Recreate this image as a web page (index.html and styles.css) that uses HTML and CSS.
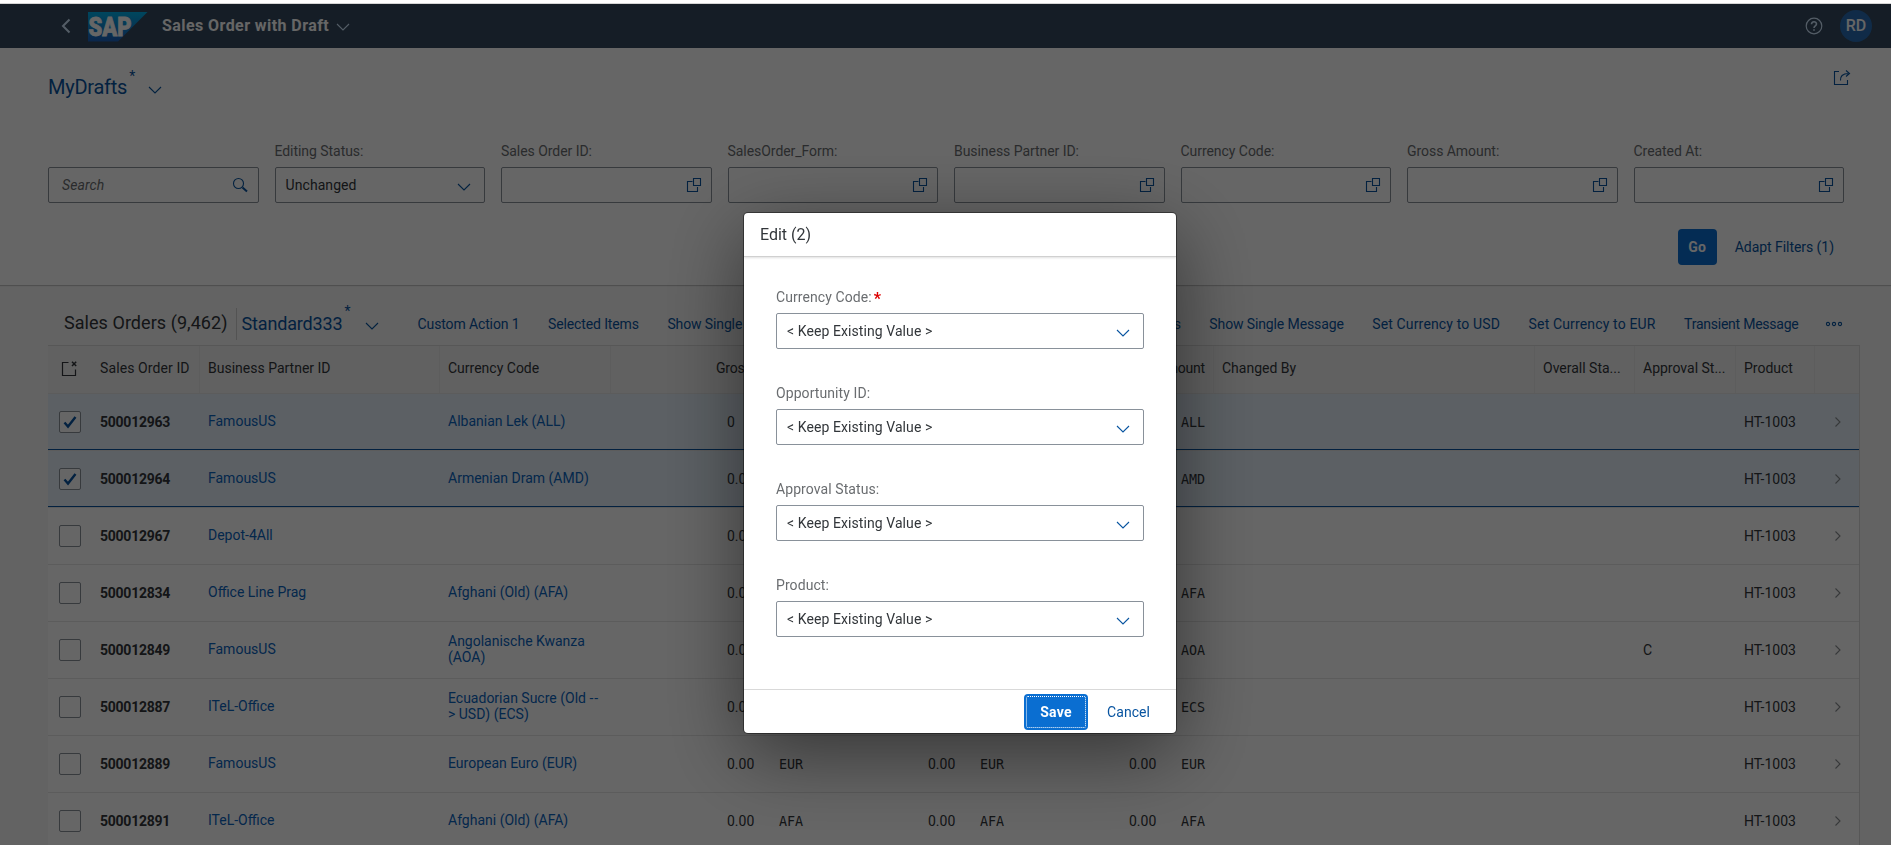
FILE: index.html
```html
<!DOCTYPE html>
<html lang="en">
<head>
    <meta charset="UTF-8">
    <meta name="viewport" content="width=device-width, initial-scale=1.0">
    <title>Sales Order with Draft</title>
    <link rel="stylesheet" href="styles.css">
</head>
<body>
    <!-- Shared icons -->
    <svg class="sprite" aria-hidden="true">
        <symbol id="chevron" viewBox="0 0 14 8"><path d="M1 1l6 6 6-6"/></symbol>
        <symbol id="valuehelp" viewBox="0 0 16 16"><path d="M6.5 4.5h-5v10h10v-4.500M7.500 1.500h7v7h-7z"/></symbol>
    </svg>

    <header class="shell">
        <svg class="back" width="10" height="16" viewBox="0 0 10 16"><path d="M8.500 1.500L2 8l6.500 6.500"/></svg>
        <svg class="logo" width="60" height="30" viewBox="0 0 60 30">
            <defs>
                <linearGradient id="sap" x1="0" y1="0" x2="0" y2="1">
                    <stop offset="0" stop-color="#00b1eb"/>
                    <stop offset="1" stop-color="#1e5fbb"/>
                </linearGradient>
            </defs>
            <path d="M0 0h59.500L30 29.500H0z" fill="url(#sap)"/>
            <text x="0.500" y="23.500" textLength="43" lengthAdjust="spacingAndGlyphs">SAP</text>
        </svg>
        <h1 class="shell-title">Sales Order with Draft</h1>
        <svg class="icon shell-chevron" width="14" height="8"><use href="#chevron"/></svg>
        <svg class="help" width="18" height="18" viewBox="0 0 18 18">
            <circle cx="9" cy="9" r="7.800"/>
            <path class="mark" d="M6.500 7.300c0-3.300 5-3.300 5-.3 0 1.800-2.500 1.900-2.500 3.900M9 12.300v1.500"/>
        </svg>
        <div class="avatar">RD</div>
    </header>

    <section class="page-header">
        <div class="variant-row">
            <span class="variant">MyDrafts</span><span class="dirty">*</span>
            <svg class="icon" width="14" height="8"><use href="#chevron"/></svg>
            <svg class="icon share" width="18" height="18" viewBox="0 0 18 18">
                <path d="M6 3.500H1.500v13h13v-4.500M7.500 12.500c-.5-4 2-7 8-7M13 2.500l3.500 3-3.500 3"/>
            </svg>
        </div>

        <div class="filters">
            <div class="field">
                <div class="label"></div>
                <div class="input search">Search
                    <svg class="icon" width="16" height="16" viewBox="0 0 16 16"><circle cx="6.500" cy="6.500" r="5"/><path class="thick" d="M10.500 10.500l4.500 4"/></svg>
                </div>
            </div>
            <div class="field">
                <div class="label">Editing Status:</div>
                <div class="input">Unchanged <svg class="icon chev" width="14" height="8"><use href="#chevron"/></svg></div>
            </div>
            <div class="field">
                <div class="label">Sales Order ID:</div>
                <div class="input"><svg class="icon" width="16" height="16"><use href="#valuehelp"/></svg></div>
            </div>
            <div class="field">
                <div class="label">SalesOrder_Form:</div>
                <div class="input"><svg class="icon" width="16" height="16"><use href="#valuehelp"/></svg></div>
            </div>
            <div class="field">
                <div class="label">Business Partner ID:</div>
                <div class="input"><svg class="icon" width="16" height="16"><use href="#valuehelp"/></svg></div>
            </div>
            <div class="field">
                <div class="label">Currency Code:</div>
                <div class="input"><svg class="icon" width="16" height="16"><use href="#valuehelp"/></svg></div>
            </div>
            <div class="field">
                <div class="label">Gross Amount:</div>
                <div class="input"><svg class="icon" width="16" height="16"><use href="#valuehelp"/></svg></div>
            </div>
            <div class="field">
                <div class="label">Created At:</div>
                <div class="input"><svg class="icon" width="16" height="16"><use href="#valuehelp"/></svg></div>
            </div>
        </div>

        <div class="filter-actions">
            <button class="btn btn-primary go">Go</button>
            <button class="btn">Adapt Filters (1)</button>
        </div>
    </section>

    <main class="content">
        <div class="toolbar">
            <h2 class="table-title">Sales Orders (9,462)</h2>
            <span class="variant small">Standard333</span><span class="dirty small">*</span>
            <svg class="icon" width="14" height="8"><use href="#chevron"/></svg>
            <div class="actions left">
                <a>Custom Action 1</a>
                <a>Selected Items</a>
                <a>Show Single Message</a>
            </div>
            <div class="actions right">
                <a>Multiple Messages</a>
                <a>Show Single Message</a>
                <a class="wide">Set Currency to USD</a>
                <a class="wide">Set Currency to EUR</a>
                <a class="tight">Transient Message</a>
                <svg class="icon" width="18" height="6" viewBox="0 0 18 6"><circle cx="3" cy="3" r="1.600"/><circle cx="9" cy="3" r="1.600"/><circle cx="15" cy="3" r="1.600"/></svg>
            </div>
        </div>

        <table class="orders">
            <colgroup>
                <col class="w-check"><col class="w-id"><col class="w-partner"><col class="w-currency">
                <col class="w-amount"><col class="w-amount"><col class="w-amount">
                <col class="w-changed"><col class="w-overall"><col class="w-approval"><col class="w-product"><col class="w-nav">
            </colgroup>
            <thead>
                <tr>
                    <th class="no-line center">
                        <svg class="clear" width="18" height="18" viewBox="0 0 18 18"><path d="M8.500 3.500H2.500v13h13v-6"/><path class="cross" d="M12 2.800l4.200 4.200m0-4.200l-4.200 4.200"/></svg>
                    </th>
                    <th>Sales Order ID</th>
                    <th>Business Partner ID</th>
                    <th>Currency Code</th>
                    <th class="right">Gross Amount</th>
                    <th class="right">Net Amount</th>
                    <th class="right">Tax Amount</th>
                    <th>Changed By</th>
                    <th>Overall Sta...</th>
                    <th>Approval St...</th>
                    <th>Product</th>
                    <th class="no-line"></th>
                </tr>
            </thead>
            <tbody id="rows"></tbody>
        </table>
    </main>

    <div class="overlay"></div>

    <div class="dialog">
        <div class="dialog-header">Edit (2)</div>
        <div class="dialog-body">
            <div class="field">
                <div class="label">Currency Code:<span class="required">*</span></div>
                <div class="input">&lt; Keep Existing Value &gt; <svg class="icon chev" width="14" height="8"><use href="#chevron"/></svg></div>
            </div>
            <div class="field">
                <div class="label">Opportunity ID:</div>
                <div class="input">&lt; Keep Existing Value &gt; <svg class="icon chev" width="14" height="8"><use href="#chevron"/></svg></div>
            </div>
            <div class="field">
                <div class="label">Approval Status:</div>
                <div class="input">&lt; Keep Existing Value &gt; <svg class="icon chev" width="14" height="8"><use href="#chevron"/></svg></div>
            </div>
            <div class="field">
                <div class="label">Product:</div>
                <div class="input">&lt; Keep Existing Value &gt; <svg class="icon chev" width="14" height="8"><use href="#chevron"/></svg></div>
            </div>
        </div>
        <div class="dialog-footer">
            <button class="btn btn-primary focused">Save</button>
            <button class="btn cancel">Cancel</button>
        </div>
    </div>

    <script>
        const orders = [
            { id: '500012963', partner: 'FamousUS', currency: 'Albanian Lek (ALL)', code: 'ALL', amount: '0', selected: true },
            { id: '500012964', partner: 'FamousUS', currency: 'Armenian Dram (AMD)', code: 'AMD', amount: '0.00', selected: true },
            { id: '500012967', partner: 'Depot-4All', currency: '', code: '', amount: '0.00' },
            { id: '500012834', partner: 'Office Line Prag', currency: 'Afghani (Old) (AFA)', code: 'AFA', amount: '0.00' },
            { id: '500012849', partner: 'FamousUS', currency: 'Angolanische Kwanza<br>(AOA)', code: 'AOA', amount: '0.00', approval: 'C' },
            { id: '500012887', partner: 'ITeL-Office', currency: 'Ecuadorian Sucre (Old <span class="dashes">--</span><br>&gt; USD) (ECS)', code: 'ECS', amount: '0.00' },
            { id: '500012889', partner: 'FamousUS', currency: 'European Euro (EUR)', code: 'EUR', amount: '0.00' },
            { id: '500012891', partner: 'ITeL-Office', currency: 'Afghani (Old) (AFA)', code: 'AFA', amount: '0.00' }
        ];

        const tick = '<svg width="14" height="13" viewBox="0 0 14 13"><path d="M1.500 6.500l3.500 4L12.500 1"/></svg>';

        document.getElementById('rows').innerHTML = orders.map(o => {
            // Gross, net and tax columns share the same cell layout
            const amount = `<td><div class="amount"><span>${o.amount}</span><span class="code">${o.code}</span></div></td>`;
            return `
            <tr class="${o.selected ? 'selected' : ''}">
                <td class="center"><div class="checkbox">${o.selected ? tick : ''}</div></td>
                <td class="id">${o.id}</td>
                <td class="link">${o.partner}</td>
                <td class="link">${o.currency}</td>
                ${amount.repeat(3)}
                <td></td>
                <td></td>
                <td>${o.approval || ''}</td>
                <td>HT-1003</td>
                <td><svg class="nav" width="8" height="12" viewBox="0 0 8 12"><path d="M1.500 1.500L6 6l-4.500 4.500"/></svg></td>
            </tr>`;
        }).join('');
    </script>
</body>
</html>
```
FILE: styles.css
```css
:root {
    --shell: #354a5f;
    --link: #0854a0;
    --brand: #0a6ed1;
    --text: #32363a;
    --label: #6a6d70;
    --field-border: #89919a;
    --line: #e5e5e5;
}

* {
    box-sizing: border-box;
}

body {
    margin: 0;
    height: 845px;
    overflow: hidden;
    border-top: 3px solid #fff;
    background-color: #f7f7f7;
    font-family: Roboto, "Noto Sans", sans-serif;
    font-size: 14px;
    color: var(--text);
}

h1, h2 {
    margin: 0;
}

svg {
    display: block;
    flex: none;
    fill: none;
    stroke-width: 1.1;
}

.sprite {
    position: absolute;
    width: 0;
    height: 0;
}

.icon {
    stroke: var(--link);
}

.thick {
    stroke-width: 2;
}

/* Shell bar */
.shell {
    display: flex;
    align-items: center;
    height: 45px;
    padding: 0 19px 0 61px;
    border-top: 1px solid #d5d5d5;
    background-color: var(--shell);
    color: #fff;
}

.back {
    stroke: #d1e8ff;
    stroke-width: 2;
    margin-right: 17px;
}

.logo {
    margin-top: 2px;
}

.logo text {
    fill: #fff;
    stroke: #fff;
    stroke-width: 0.8;
    font: 900 25px Roboto, sans-serif;
}

.shell-title {
    margin: -1px 0 0 14px;
    font-size: 16px;
    font-weight: 700;
    letter-spacing: 0.43px;
}

.shell-chevron {
    margin: 2px 0 0 7px;
    stroke: #d1e8ff;
}

.help {
    margin-left: auto;
    margin-right: 17px;
    stroke: #d1e8ff;
    stroke-width: 1.2;
}

.help .mark {
    stroke-width: 1.6;
}

.avatar {
    width: 32px;
    height: 32px;
    border-radius: 50%;
    background-color: #2a6cb3;
    font-size: 16px;
    font-weight: 500;
    line-height: 31px;
    text-align: center;
}

/* Filter header */
.page-header {
    height: 237px;
    padding: 0 47px 0 48px;
    background-color: #fff;
    box-shadow: 0 1px 1px rgba(0, 0, 0, 0.2);
    position: relative;
}

.variant-row {
    display: flex;
    align-items: center;
    height: 78px;
}

.variant {
    color: var(--link);
    font-size: 20px;
    letter-spacing: -0.25px;
}

.dirty {
    align-self: flex-start;
    margin: 20px 13px 0 2px;
    color: var(--link);
    font-size: 14px;
}

.variant-row .icon {
    margin-top: 5px;
}

.variant-row .share {
    margin: -20px -7px 0 auto;
}

.filters {
    display: grid;
    grid-template-columns: repeat(8, 1fr);
    gap: 16px;
    padding-top: 14px;
}

.label {
    height: 27px;
    line-height: 23px;
    color: var(--label);
    letter-spacing: -0.05px;
}

.input {
    display: flex;
    align-items: center;
    justify-content: space-between;
    height: 36px;
    padding: 0 9px 0 10px;
    border: 1px solid var(--field-border);
    border-radius: 2px;
    background-color: #fff;
    letter-spacing: 0.08px;
}

.input .icon:only-child {
    margin-left: auto;
}

.input .chev {
    margin: 4px 4px 0 0;
}

.search {
    padding-left: 13px;
    padding-right: 10px;
    font-style: italic;
    color: var(--label);
}

.btn {
    height: 36px;
    padding: 0 10px;
    border: 0;
    border-radius: 4px;
    background: none;
    color: var(--link);
    font: inherit;
    letter-spacing: -0.05px;
}

.btn-primary {
    background-color: var(--brand);
    color: #fff;
    font-weight: 700;
    letter-spacing: 0.3px;
}

.go {
    width: 39px;
}

.filter-actions {
    display: flex;
    justify-content: flex-end;
    gap: 8px;
    padding-top: 26px;
}

/* Table toolbar */
.content {
    padding: 22px 31px 0 48px;
}

.toolbar {
    display: flex;
    align-items: center;
    height: 38px;
    padding: 0 17px 4px 16px;
}

.table-title {
    height: 32px;
    margin-right: 4px;
    padding-right: 9px;
    border-right: 1px solid #d0d0d0;
    font-size: 18px;
    font-weight: 400;
    line-height: 30px;
    letter-spacing: 0.05px;
}

.variant.small {
    margin-top: -2px;
    font-size: 18px;
    letter-spacing: -0.15px;
}

.dirty.small {
    margin: -4px 14px 0 2px;
}

.toolbar .icon {
    margin-top: 3px;
}

.actions {
    display: flex;
    align-items: center;
    gap: 28.5px;
    color: var(--link);
    white-space: nowrap;
    letter-spacing: -0.12px;
}

.actions .icon {
    margin: 0 0 0 -2px;
}

.actions .wide {
    letter-spacing: 0.15px;
}

.actions .tight {
    letter-spacing: -0.24px;
}

.actions.left {
    margin-left: 39px;
}

.actions.right {
    margin-left: auto;
}

/* Orders table */
.orders {
    width: 1812px;
    table-layout: fixed;
    border-collapse: separate;
    border-spacing: 0;
    border-top: 1px solid #d9d9d9;
    border-right: 1px solid #d9d9d9;
}

.w-check { width: 44px; }
.w-id { width: 108px; }
.w-partner { width: 240px; }
.w-currency { width: 171px; }
.w-amount { width: 201px; }
.w-changed { width: 321px; }
.w-overall { width: 100px; }
.w-approval { width: 101px; }
.w-product { width: 79px; }
.w-nav { width: 44px; }

th {
    height: 48px;
    padding: 0 8px 3px;
    border-right: 1px solid #e9e9e9;
    border-bottom: 1px solid var(--line);
    background-color: #f2f2f2;
    font-weight: 400;
    text-align: left;
    white-space: nowrap;
}

th.right {
    text-align: right;
    letter-spacing: -0.2px;
}

.no-line {
    border-right: 0;
}

th:nth-child(2) {
    padding-right: 0;
    letter-spacing: 0.1px;
}

.center {
    padding: 0 0 3px 12px;
}

.clear {
    stroke: var(--text);
    stroke-width: 1.2;
}

.clear .cross {
    stroke-width: 1.5;
}

.orders td {
    height: 57px;
    border-bottom: 1px solid var(--line);
    background-color: #fff;
    line-height: 16px;
}

td:not(.center) {
    padding: 0 8px;
}

td.center {
    padding: 0 0 0 11px;
}

.orders .selected td {
    background-color: #e5f0fa;
    box-shadow: inset 0 -1px 0 var(--link);
}

.checkbox {
    display: flex;
    align-items: center;
    justify-content: center;
    width: 22px;
    height: 22px;
    border: 1px solid var(--field-border);
    border-radius: 2px;
    background-color: #fff;
    stroke: var(--link);
}

.checkbox svg {
    stroke-width: 2.4;
}

.orders .id {
    font-weight: 700;
    letter-spacing: -0.25px;
}

.orders .link {
    color: #0a64be;
    padding-bottom: 2px;
}

.dashes {
    letter-spacing: 1px;
}

.amount {
    display: grid;
    grid-template-columns: 27px 1fr;
    align-items: baseline;
    gap: 25px;
    padding-left: 108px;
}

.code {
    font-family: "DejaVu Sans Mono", monospace;
    font-size: 13.4px;
}

.nav {
    margin-left: 11px;
    stroke: #8a8d90;
}

/* Dims everything under the shell top edge */
.overlay {
    position: fixed;
    inset: 4px 0 0 0;
    background-color: rgba(0, 0, 0, 0.6);
}

.dialog {
    position: fixed;
    top: 213px;
    left: 744px;
    display: flex;
    flex-direction: column;
    width: 432px;
    height: 520px;
    border-radius: 4px;
    background-color: #fff;
    box-shadow: 0 0 0 1px rgba(0, 0, 0, 0.42), 0 20px 80px 0 rgba(0, 0, 0, 0.5);
}

.dialog-header {
    height: 44px;
    padding-left: 16px;
    border-bottom: 1px solid #d0d0d0;
    box-shadow: 0 1px 2px rgba(0, 0, 0, 0.12);
    font-size: 16px;
    line-height: 44px;
}

.dialog-body {
    flex: 1;
    display: flex;
    flex-direction: column;
    gap: 33px;
    padding: 29px 32px 0;
}

.dialog .input {
    padding-right: 10px;
}

.dialog .chev {
    margin-right: 3px;
}

.dialog .label {
    letter-spacing: 0.08px;
}

.required {
    margin-left: 2px;
    color: #d00;
    font-weight: 700;
    font-size: 16px;
    line-height: 1;
    vertical-align: -2px;
}

.dialog-footer {
    display: flex;
    align-items: center;
    justify-content: flex-end;
    gap: 9px;
    height: 44px;
    padding-right: 16px;
    border-top: 1px solid #d9d9d9;
}

.focused {
    width: 64px;
    outline: 1px dotted #fff;
    outline-offset: -3px;
}

.cancel {
    letter-spacing: 0.05px;
}
```
